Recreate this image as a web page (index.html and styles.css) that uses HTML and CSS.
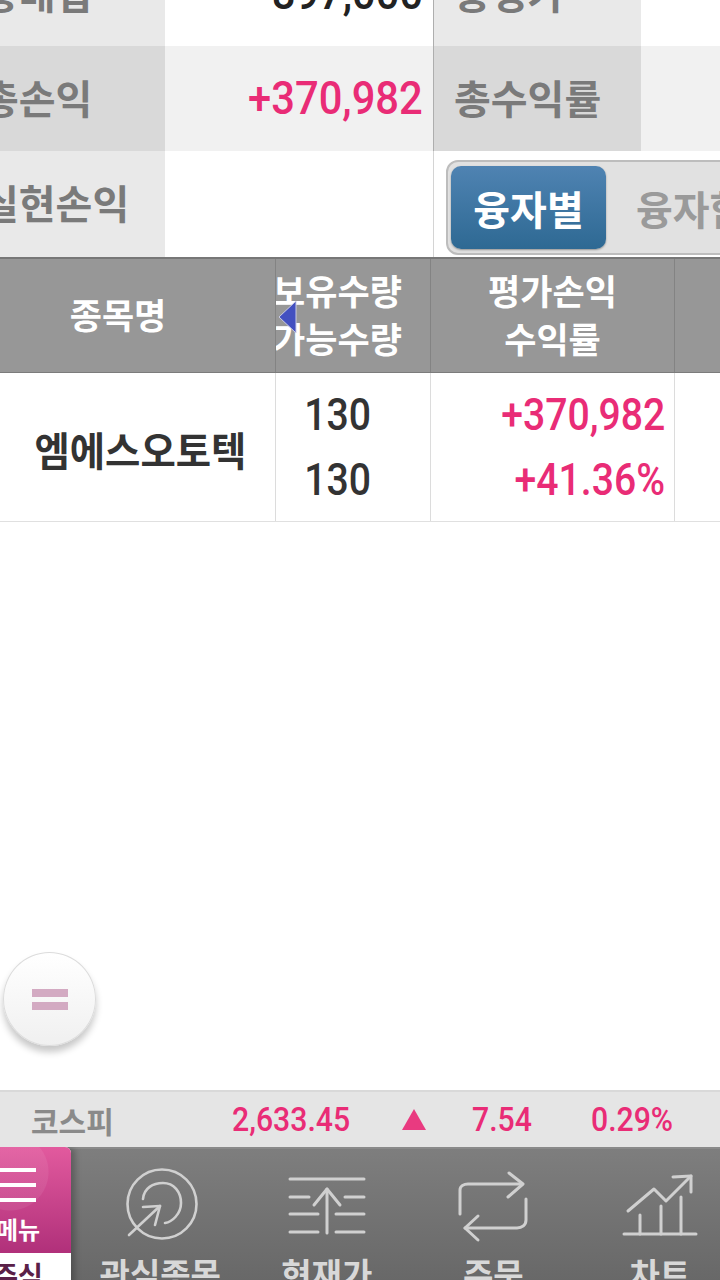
FILE: index.html
```html
<!DOCTYPE html>
<html lang="ko">
<head>
<meta charset="utf-8">
<title>잔고</title>
<link rel="stylesheet" href="styles.css">
</head>
<body>
<div class="screen">
  <main class="content">
    <section class="summary">
      <div class="s-label"><span class="t">총매입</span></div>
      <div class="s-value"><span class="n dark">897,000</span></div>
      <div class="s-label s-second"><span class="t">총평가</span></div>
      <div class="s-end"></div>

      <div class="s-label alt"><span class="t">총손익</span></div>
      <div class="s-value alt-light"><span class="n pink">+370,982</span></div>
      <div class="s-label s-second alt"><span class="t">총수익률</span></div>
      <div class="s-end alt-light"></div>

      <div class="s-label"><span class="t">실현손익</span></div>
      <div class="s-value"></div>
      <div class="s-toggle-cell">
        <div class="toggle">
          <span class="toggle-on"><span class="t">융자별</span></span>
          <span class="toggle-off"><span class="t">융자합산</span></span>
        </div>
      </div>
    </section>

    <section class="table">
      <div class="thead">
        <div class="th"><span class="h">종목명</span></div>
        <div class="th th-qty"><span class="h">보유수량</span><span class="h">가능수량</span></div>
        <div class="th"><span class="h">평가손익</span><span class="h">수익률</span></div>
        <div class="th"></div>
        <svg class="scroll-arrow" width="20" height="34" viewBox="0 0 20 34"><path d="M19 1 L2 17 L19 33 Z" fill="#4350c0" stroke="#c9cbe6" stroke-width="1"/></svg>
      </div>
      <div class="tbody">
        <div class="td td-name"><span class="name">엠에스오토텍</span></div>
        <div class="td td-qty"><span class="cn">130</span><span class="cn">130</span></div>
        <div class="td td-pl"><span class="cn pink">+370,982</span><span class="cn pink">+41.36%</span></div>
        <div class="td"></div>
      </div>
    </section>

    <button class="fab" type="button" aria-label="메뉴"><span class="fab-line"></span><span class="fab-line"></span></button>
  </main>

  <section class="ticker">
    <span class="k-name">코스피</span>
    <span class="k-num k-idx">2,633.45</span>
    <span class="k-up"></span>
    <span class="k-num k-chg">7.54</span>
    <span class="k-num k-rate">0.29%</span>
  </section>

  <nav class="nav">
    <div class="nav-menu">
      <div class="menu-top">
        <span class="menu-bars"><i></i><i></i><i></i></span>
        <span class="menu-text">메뉴</span>
      </div>
      <div class="menu-bottom">주식</div>
    </div>
    <div class="nav-item">
      <svg width="80" height="80" viewBox="0 0 80 80" class="ico"><g fill="none" stroke="#d0d0d0" stroke-width="2.6" stroke-linecap="round" stroke-linejoin="round"><circle cx="42" cy="40" r="34.5"/><path d="M23 35 C24 24 33 19 43 19 C54 19 61 28 61 39 C61 50 52 58 45 59"/><path d="M9 71 L40 42"/><path d="M23 43 L40 42 L35 61"/></g></svg>
      <span class="nav-label">관심종목</span>
    </div>
    <div class="nav-item">
      <svg width="80" height="80" viewBox="0 0 80 80" class="ico"><g fill="none" stroke="#d0d0d0" stroke-width="3" stroke-linecap="round" stroke-linejoin="round"><path d="M3 15 H77"/><path d="M40 25 V69"/><path d="M27 41 L40 25 L53 41"/><path d="M3 33 H22"/><path d="M58 33 H77"/><path d="M3 50 H31"/><path d="M49 50 H77"/><path d="M3 68 H31"/><path d="M49 68 H77"/></g></svg>
      <span class="nav-label">현재가</span>
    </div>
    <div class="nav-item">
      <svg width="80" height="80" viewBox="0 0 80 80" class="ico"><g fill="none" stroke="#d0d0d0" stroke-width="3" stroke-linecap="round" stroke-linejoin="round"><path d="M7 50 V26 C7 22 11 20 15 20 H69"/><path d="M56 9 L70 20 L55 33"/><path d="M73 35 V56 C73 61 69 64 64 64 H12"/><path d="M25 52 L12 64 L25 76"/></g></svg>
      <span class="nav-label">주문</span>
    </div>
    <div class="nav-item">
      <svg width="80" height="80" viewBox="0 0 80 80" class="ico"><g fill="none" stroke="#d0d0d0" stroke-width="3" stroke-linecap="round" stroke-linejoin="round"><path d="M4 70 H76"/><path d="M20 51 V70"/><path d="M41 42 V70"/><path d="M61 33 V70"/><path d="M8 47 L34 25 L46 37 L71 12"/><path d="M53 13 L71 12 L71 28"/></g></svg>
      <span class="nav-label">차트</span>
    </div>
  </nav>
</div>
</body>
</html>
```

FILE: styles.css
```css
* { box-sizing: border-box; }
html, body { margin: 0; padding: 0; background: #fff; }
body { font-family: "Noto Sans CJK KR", "Noto Sans", sans-serif; }

.screen {
  width: 720px;
  height: 1280px;
  overflow: hidden;
  display: grid;
  grid-template-rows: 1090px 57px 133px;
}

.content { position: relative; overflow: hidden; background: #fff; }

/* summary */
.summary {
  margin-top: -59px;
  margin-left: -45px;
  display: grid;
  grid-template-columns: 210px 268px 208px 79px;
  grid-template-rows: 105px 105px 106px;
}
.s-label {
  background: #e9e9e9;
  color: #7a7a7a;
  display: flex;
  align-items: center;
  justify-content: flex-start;
  padding: 0 0 4px 27px;
  font-size: 40px;
  font-weight: 700;
}
.s-second {
  border-left: 1px solid #aeaeae;
  padding: 0 0 4px 20px;
}
.s-label.alt { background: #d9d9d9; }
.s-value {
  display: flex;
  align-items: center;
  justify-content: flex-end;
  padding: 0 10px 2px 0;
  background: #fff;
}
.alt-light { background: #f1f1f1; }
.s-end { background: #fff; }
.s-end.alt-light { background: #f1f1f1; }
.t { display: inline-block; white-space: nowrap; }

.n {
  font-family: Roboto, "Liberation Sans", sans-serif;
  font-weight: 500;
  font-size: 46px;
  line-height: 1;
  display: inline-block;
  transform: scaleX(.906);
  transform-origin: right center;
}
.dark { color: #222; }
.pink { color: #e92c76; }

.s-toggle-cell {
  grid-column: 3 / 5;
  border-left: 1px solid #d4d4d4;
  padding: 9px 0 0 12px;
  background: #fff;
  overflow: hidden;
}
.toggle {
  width: 320px;
  height: 95px;
  border: 2px solid #bdbdbd;
  border-radius: 12px;
  background: #e1e1e1;
  padding: 4px 3px;
  display: flex;
  align-items: stretch;
}
.toggle-on {
  width: 155px;
  flex: none;
  border-radius: 10px;
  background: linear-gradient(#4f83b2, #2e6993);
  box-shadow: 0 1px 2px rgba(0,0,0,.35);
  color: #fff;
  font-size: 40px;
  font-weight: 700;
  display: flex;
  align-items: center;
  justify-content: center;
}
.toggle-off {
  flex: none;
  padding: 0 0 0 30px;
  color: #9a9a9a;
  font-size: 40px;
  font-weight: 700;
  display: flex;
  align-items: center;
}

/* table */
.table { display: block; }
.thead {
  position: relative;
  display: grid;
  grid-template-columns: 275px 155px 244px 46px;
  height: 116px;
  background: #979797;
  border-top: 2px solid #777;
  border-bottom: 1px solid #7c7c7c;
}
.th {
  display: flex;
  flex-direction: column;
  align-items: center;
  justify-content: center;
  overflow: hidden;
  border-left: 1px solid #838383;
  color: #fff;
  font-size: 35px;
  font-weight: 700;
  line-height: 48px;
  padding-bottom: 4px;
}
.th:first-child { border-left: 0; padding-right: 39px; }
.th-qty { padding-right: 31px; }
.h { display: block; white-space: nowrap; }
.scroll-arrow { position: absolute; left: 277px; top: 41px; }

.tbody {
  display: grid;
  grid-template-columns: 275px 155px 244px 46px;
  height: 149px;
  border-bottom: 1px solid #e0e0e0;
}
.td {
  border-left: 1px solid #dcdcdc;
  display: flex;
  flex-direction: column;
  justify-content: center;
  gap: 15px;
  overflow: hidden;
}
.td-name {
  border-left: 0;
  align-items: center;
  padding: 3px 0 0 5px;
}
.name { color: #333; font-size: 40px; font-weight: 700; display: inline-block; transform: scaleX(.96); white-space: nowrap; }
.cn {
  font-family: Roboto, "Liberation Sans", sans-serif;
  font-weight: 500;
  font-size: 44px;
  line-height: 50px;
  color: #333;
  display: block;
  transform: scaleX(.89);
}
.cn.pink { color: #e92c76; }
.td-qty { align-items: center; padding-right: 31px; }
.td-pl { align-items: flex-end; padding-right: 9px; }
.td-pl .cn { transform-origin: right center; }

.fab {
  position: absolute;
  left: 3px;
  top: 952px;
  width: 93px;
  height: 94px;
  border-radius: 50%;
  border: 1px solid #dcdcdc;
  background: linear-gradient(#ffffff, #f0f0f0);
  box-shadow: 0 6px 7px rgba(0,0,0,.22);
  padding: 0;
  display: flex;
  flex-direction: column;
  align-items: center;
  justify-content: center;
  gap: 5px;
}
.fab-line { width: 36px; height: 8px; background: #d3aac2; display: block; }

/* ticker */
.ticker {
  background: #e5e5e5;
  border-top: 2px solid #d9d9d9;
  font-family: Roboto, "Liberation Sans", sans-serif;
  display: grid;
  grid-template-columns: 31px 201px 170px 70px 119px auto;
  align-items: center;
}
.k-name {
  grid-column: 2;
  color: #8a8a8a;
  font-family: "Noto Sans CJK KR", sans-serif;
  font-size: 30px;
  font-weight: 700;
  display: inline-block;
}
.k-num {
  color: #e92c76;
  font-size: 33px;
  font-weight: 500;
  display: inline-block;
  transform: scaleX(.915);
  transform-origin: left center;
  white-space: nowrap;
}
.k-idx { grid-column: 3; }
.k-up {
  grid-column: 4;
  width: 0;
  height: 0;
  border-left: 12.5px solid transparent;
  border-right: 12.5px solid transparent;
  border-bottom: 21px solid #e93a80;
}
.k-chg { grid-column: 5; }
.k-rate { grid-column: 6; }

/* nav */
.nav {
  background: linear-gradient(#8a8a8a 2px, #7e7e7e 2px, #686868);
  display: grid;
  grid-template-columns: 77px repeat(4, 166.5px);
  position: relative;
  overflow: hidden;
}
.nav-menu {
  margin-left: -35px;
  width: 106px;
  height: 200px;
  border-top-right-radius: 6px;
  background: #fff;
  box-shadow: 4px 0 6px rgba(0,0,0,.25);
  overflow: hidden;
  position: relative;
  z-index: 1;
}
.menu-top {
  height: 106px;
  background:
    radial-gradient(circle at 45px 25px, rgba(255,255,255,.07) 0 38px, transparent 39px),
    linear-gradient(#e25a9e, #b0307a);
  display: flex;
  flex-direction: column;
  align-items: center;
}
.menu-bars {
  width: 36px;
  display: flex;
  flex-direction: column;
  gap: 11px;
  margin-top: 21px;
}
.menu-bars i { display: block; height: 4px; background: #fff; }
.menu-text {
  margin-top: 12px;
  color: #fff;
  font-size: 24px;
  font-weight: 700;
  line-height: 30px;
  white-space: nowrap;
}
.menu-bottom {
  text-align: center;
  color: #5a2048;
  font-size: 27px;
  font-weight: 700;
  line-height: 36px;
  padding-top: 4px;
}
.nav-item {
  display: flex;
  flex-direction: column;
  align-items: center;
  padding-top: 17px;
}
.ico { display: block; flex: none; }
.nav-label {
  color: #d8d8d8;
  font-size: 33px;
  font-weight: 700;
  line-height: 40px;
  margin-top: 9px;
  white-space: nowrap;
}
```
